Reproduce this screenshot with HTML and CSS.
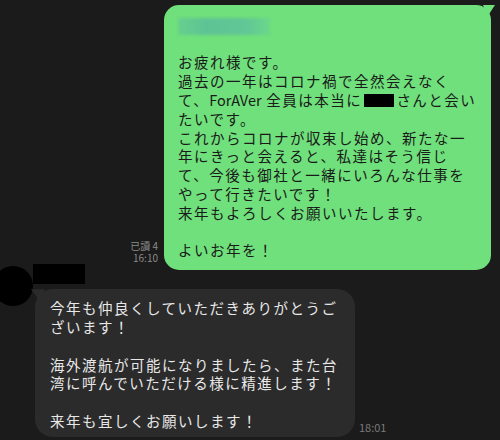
FILE: index.html
```html
<!DOCTYPE html>
<html lang="ja">
  <head>
    <meta charset="UTF-8" />
    <meta name="viewport" content="width=device-width, initial-scale=1.0" />
    <title>Chat</title>
    <link rel="stylesheet" href="styles.css">
  </head>

  <body>
    <div class="chat">
      <div class="row sent">
        <div class="meta">
          <span>已讀 4</span>
          <span>16:10</span>
        </div>
        <div class="bubble green">
          <span class="blur"></span><br>
          <br>
          お疲れ様です。<br>
          過去の一年はコロナ禍で全然会えなく<br>
          て、<span class="latin">ForAVer</span> 全員は本当に<span class="redact"></span>さんと会い<br>
          たいです。<br>
          これからコロナが収束し始め、新たな一<br>
          年にきっと会えると、私達はそう信じ<br>
          て、今後も御社と一緒にいろんな仕事を<br>
          やって行きたいです！<br>
          来年もよろしくお願いいたします。<br>
          <br>
          よいお年を！
        </div>
      </div>

      <div class="row recv">
        <div class="avatar"></div>
        <div class="recv-body">
          <div class="name-box"></div>
          <div class="recv-line">
            <div class="bubble gray">
              今年も仲良くしていただきありがとうご<br>
              ざいます！<br>
              <br>
              海外渡航が可能になりましたら、また台<br>
              湾に呼んでいただける様に精進します！<br>
              <br>
              来年も宜しくお願いします！
            </div>
            <div class="meta">18:01</div>
          </div>
        </div>
      </div>
    </div>
  </body>
</html>
```

FILE: styles.css
```css
body {
  margin: 0;
  background: #1b1b1b;
  font-family: "Noto Sans CJK JP", "Noto Sans", sans-serif;
}
.chat {
  width: 500px;
  height: 440px;
  overflow: hidden;
  padding-top: 5px;
  box-sizing: border-box;
}
.row {
  display: flex;
  align-items: flex-end;
}
.sent {
  justify-content: flex-end;
  padding-right: 9px;
}
.bubble {
  position: relative;
  box-sizing: border-box;
  font-size: 14.5px;
  letter-spacing: 1.5px;
  line-height: 18.8px;
  white-space: nowrap;
}
.green {
  width: 327px;
  background: #6fe07b;
  color: #1a1a1a;
  border-radius: 15px;
  padding: 10px 10px 10px 14px;
}
.green::after {
  content: "";
  position: absolute;
  top: 0;
  right: -4px;
  width: 12px;
  height: 12px;
  background: #6fe07b;
  clip-path: polygon(0 0, 100% 0, 35% 100%);
}
.blur {
  display: inline-block;
  width: 92px;
  height: 17px;
  vertical-align: middle;
  background: linear-gradient(90deg, #67d08d 0%, #5ec394 30%, #62c796 75%, #6ad88a 100%);
  filter: blur(1.5px);
}
.latin {
  letter-spacing: 0;
}
.redact {
  display: inline-block;
  width: 30px;
  height: 13px;
  margin: 0 2px;
  vertical-align: -1px;
  background: #000;
}
.meta {
  font-size: 10px;
  line-height: 12px;
  color: #8a8a8a;
  text-align: right;
}
.sent .meta {
  display: flex;
  flex-direction: column;
  gap: 0;
  margin-right: 6px;
  padding-bottom: 6px;
}
.recv {
  align-items: flex-start;
  margin-top: -6px;
}
.avatar {
  flex-shrink: 0;
  width: 40px;
  height: 40px;
  margin-left: -7px;
  margin-top: 2px;
  border-radius: 50%;
  background: #000;
}
.name-box {
  width: 52px;
  height: 20px;
  background: #000;
}
.recv-line {
  display: flex;
  align-items: flex-end;
  margin-top: 5px;
  margin-left: 2px;
}
.gray {
  width: 320px;
  background: #2b2b2b;
  color: #e8e8e8;
  border-radius: 18px;
  padding: 10px 10px 6px 15px;
}
.gray::before {
  content: "";
  position: absolute;
  top: 0;
  left: -4px;
  width: 14px;
  height: 12px;
  background: #2b2b2b;
  clip-path: polygon(0 0, 100% 0, 65% 100%);
}
.recv-line .meta {
  font-size: 11px;
  color: #7a7a7a;
  margin-left: 4px;
  padding-bottom: 4px;
}
```
